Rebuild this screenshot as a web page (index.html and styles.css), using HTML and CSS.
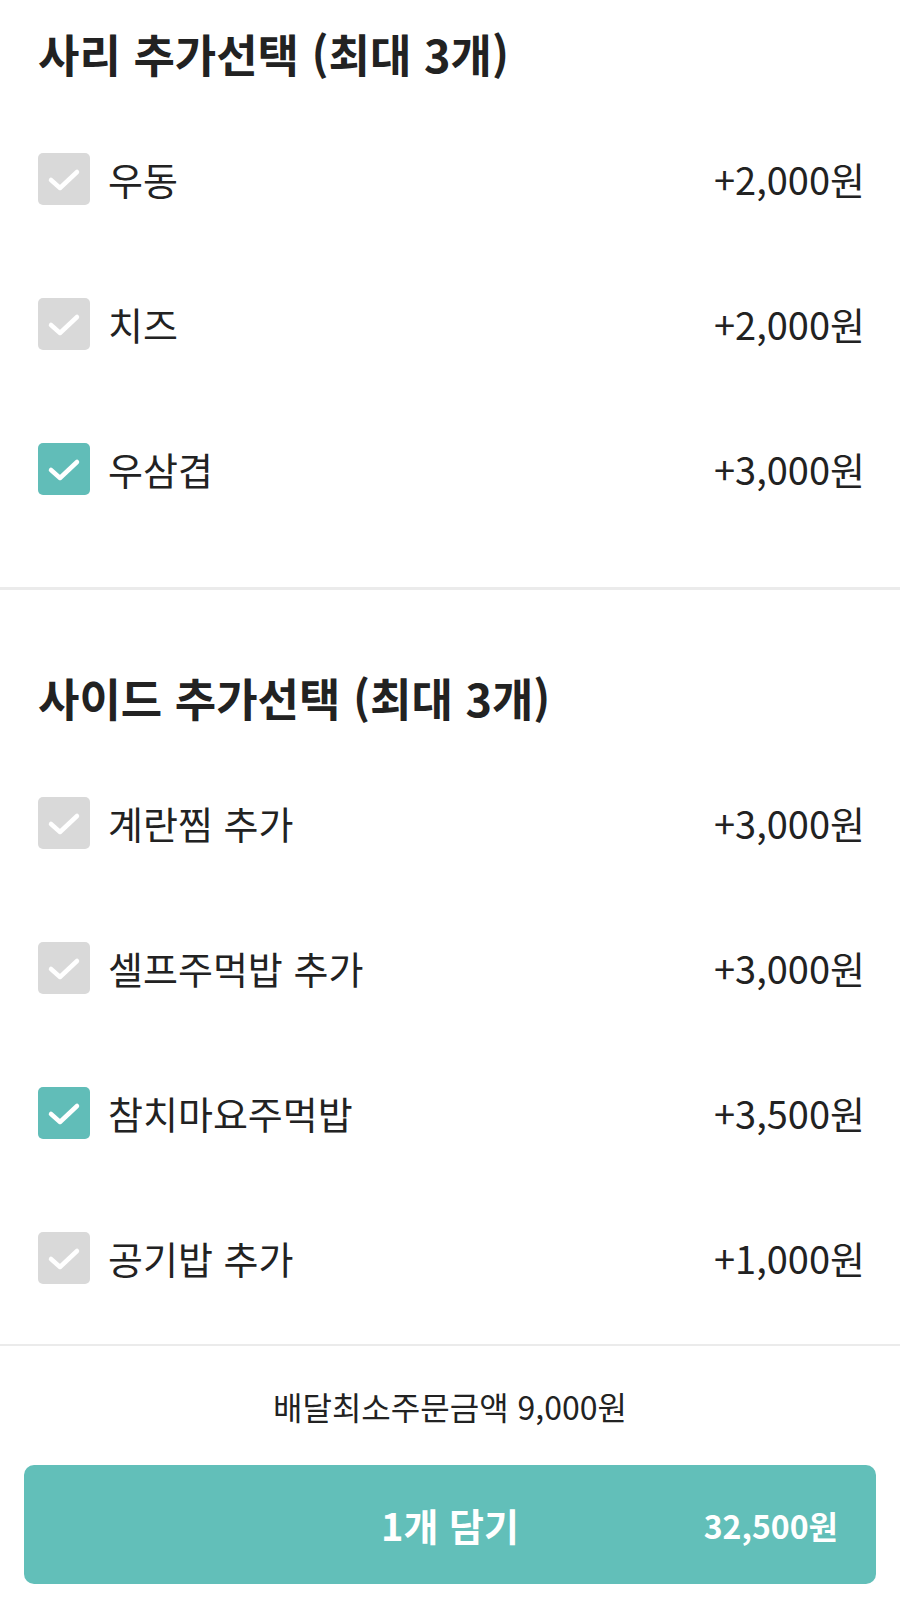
FILE: index.html
```html
<!DOCTYPE html>
<html lang="ko">

<head>
    <meta charset="UTF-8">
    <meta name="viewport" content="width=device-width, initial-scale=1.0">
    <title>옵션 선택</title>
    <link rel="stylesheet" href="styles.css">
</head>

<body>
    <div class="page">
        <section class="optionGroup first">
            <h2 class="groupTitle">사리 추가선택 (최대 3개)</h2>
            <label class="optionRow">
                <span class="checkBox"><svg viewBox="0 0 52 52"><path d="M13 27 L22 35 L39 19" /></svg></span>
                <span class="optionName">우동</span>
                <span class="optionPrice">+2,000원</span>
            </label>
            <label class="optionRow">
                <span class="checkBox"><svg viewBox="0 0 52 52"><path d="M13 27 L22 35 L39 19" /></svg></span>
                <span class="optionName">치즈</span>
                <span class="optionPrice">+2,000원</span>
            </label>
            <label class="optionRow">
                <span class="checkBox checked"><svg viewBox="0 0 52 52"><path d="M13 27 L22 35 L39 19" /></svg></span>
                <span class="optionName">우삼겹</span>
                <span class="optionPrice">+3,000원</span>
            </label>
        </section>

        <section class="optionGroup second">
            <h2 class="groupTitle">사이드 추가선택 (최대 3개)</h2>
            <label class="optionRow">
                <span class="checkBox"><svg viewBox="0 0 52 52"><path d="M13 27 L22 35 L39 19" /></svg></span>
                <span class="optionName">계란찜 추가</span>
                <span class="optionPrice">+3,000원</span>
            </label>
            <label class="optionRow">
                <span class="checkBox"><svg viewBox="0 0 52 52"><path d="M13 27 L22 35 L39 19" /></svg></span>
                <span class="optionName">셀프주먹밥 추가</span>
                <span class="optionPrice">+3,000원</span>
            </label>
            <label class="optionRow">
                <span class="checkBox checked"><svg viewBox="0 0 52 52"><path d="M13 27 L22 35 L39 19" /></svg></span>
                <span class="optionName">참치마요주먹밥</span>
                <span class="optionPrice">+3,500원</span>
            </label>
            <label class="optionRow">
                <span class="checkBox"><svg viewBox="0 0 52 52"><path d="M13 27 L22 35 L39 19" /></svg></span>
                <span class="optionName">공기밥 추가</span>
                <span class="optionPrice">+1,000원</span>
            </label>
        </section>

        <footer class="orderBar">
            <p class="minOrder">배달최소주문금액 9,000원</p>
            <button class="addBtn">
                <span class="addLabel">1개 담기</span>
                <span class="addPrice">32,500원</span>
            </button>
        </footer>
    </div>
</body>

</html>
```

FILE: styles.css
```css
* {
    box-sizing: border-box;
    padding: 0;
    margin: 0;
}

body {
    background-color: #fff;
    color: #222;
    font-family: "Noto Sans CJK KR", "Noto Sans", sans-serif;
}

.page {
    width: 900px;
}

.optionGroup {
    padding: 0 35px 0 38px;
}

.optionGroup.first {
    padding-top: 24px;
    padding-bottom: 46px;
    border-bottom: 3px solid #ebebeb;
}

.optionGroup.second {
    padding-top: 78px;
    padding-bottom: 14px;
}

.groupTitle {
    font-size: 45px;
    font-weight: 700;
    line-height: 60px;
    margin-bottom: 22px;
}

.optionRow {
    height: 145px;
    display: flex;
    align-items: center;
}

.checkBox {
    width: 52px;
    height: 52px;
    border-radius: 5px;
    background-color: #d9d9d9;
    display: flex;
    flex-shrink: 0;
}

.checkBox svg {
    width: 52px;
    height: 52px;
}

.checkBox path {
    fill: none;
    stroke: #fff;
    stroke-width: 4.5;
    stroke-linecap: round;
    stroke-linejoin: round;
}

.checkBox.checked {
    background-color: #61bdb8;
}

.optionName {
    font-size: 38px;
    margin-left: 18px;
    flex: 1;
}

.optionPrice {
    font-size: 38px;
}

.orderBar {
    border-top: 2px solid #ebebeb;
    padding: 40px 24px 18px 24px;
    text-align: center;
}

.minOrder {
    font-size: 32px;
    line-height: 40px;
    margin-bottom: 39px;
}

.addBtn {
    width: 100%;
    height: 119px;
    border: none;
    border-radius: 10px;
    background-color: #62bfb9;
    color: #fff;
    font-family: inherit;
    display: grid;
    grid-template-columns: 1fr auto 1fr;
    align-items: center;
    padding: 0 38px;
}

.addLabel {
    grid-column: 2;
    font-size: 38px;
    font-weight: 700;
}

.addPrice {
    grid-column: 3;
    justify-self: end;
    font-size: 32px;
    font-weight: 700;
}
```
